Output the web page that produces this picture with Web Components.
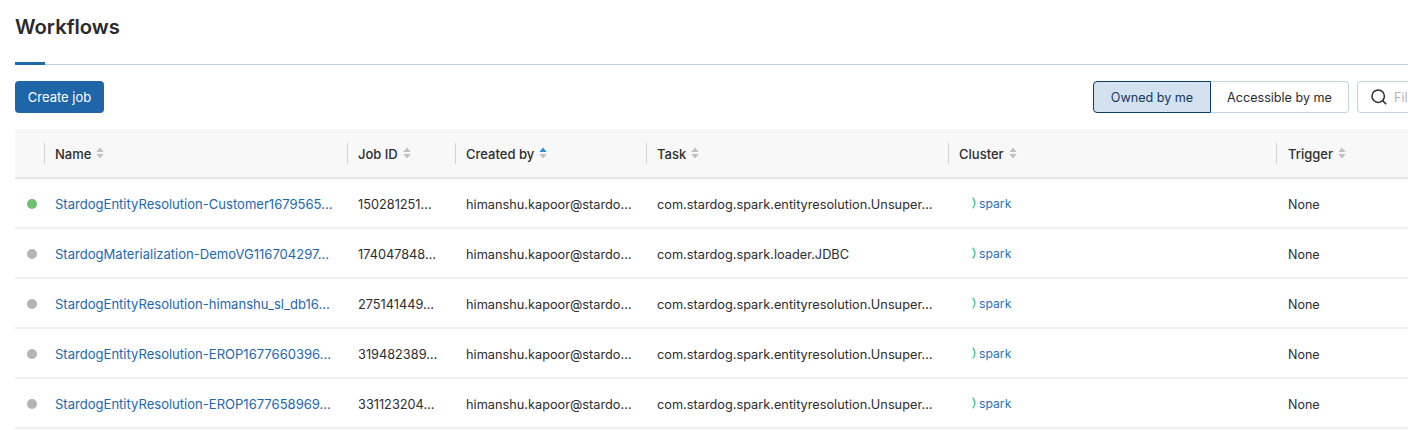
<!DOCTYPE html>
<html lang="en"><head><meta charset="utf-8"><title>Workflows</title>
<style>
html,body{margin:0;padding:0;background:#fff;overflow:hidden;height:430px}
body{font-family:Inter,"Liberation Sans",sans-serif;color:#2d2d2d}
</style></head><body>
<wf-page>
  <wf-heading slot="head">Workflows</wf-heading>
  <wf-tabline slot="head"></wf-tabline>
  <wf-toolbar slot="head"></wf-toolbar>
  <wf-table>
    <wf-head></wf-head>
    <wf-row state="on" name="StardogEntityResolution-Customer1679565…" job="150281251…" task="com.stardog.spark.entityresolution.Unsuper…"></wf-row>
    <wf-row name="StardogMaterialization-DemoVG116704297…" job="174047848…" task="com.stardog.spark.loader.JDBC"></wf-row>
    <wf-row name="StardogEntityResolution-himanshu_sl_db16…" job="275141449…" task="com.stardog.spark.entityresolution.Unsuper…"></wf-row>
    <wf-row name="StardogEntityResolution-EROP1677660396…" job="319482389…" task="com.stardog.spark.entityresolution.Unsuper…"></wf-row>
    <wf-row name="StardogEntityResolution-EROP1677658969…" job="331123204…" task="com.stardog.spark.entityresolution.Unsuper…"></wf-row>
  </wf-table>
</wf-page>
<script>
const COLS='29px 303px 108px 191px 302px 328px 132px';
const def=(n,html)=>customElements.define(n,class extends HTMLElement{
  connectedCallback(){ if(this.shadowRoot)return; const r=this.attachShadow({mode:'open'}); r.innerHTML=typeof html==='function'?html(this):html; }
});
def('wf-page',`<style>:host{display:block;width:1408px;height:430px;overflow:hidden;box-sizing:border-box;padding-left:15px}
.h{display:block}</style><slot name="head" class="h"></slot><slot></slot>`);
def('wf-heading',`<style>:host{display:block;height:62px;box-sizing:border-box;padding-top:14px;font-size:20.2px;line-height:26px;font-weight:600;color:#2a2a2a}</style><slot></slot>`);
def('wf-tabline',`<style>:host{display:block;height:3px;box-sizing:border-box;padding-top:2px;position:relative}
.l{height:1px;background:#bdd0e3}.a{position:absolute;left:0;top:0;width:30px;height:3px;background:#1f68ac}</style><div class="a"></div><div class="l"></div>`);
def('wf-toolbar',`<style>:host{display:flex;align-items:stretch;height:32px;margin-top:16px;font-size:12.6px;box-sizing:border-box}
.create{width:89px;background:#1f66a9;color:#fff;border-radius:4px;text-align:center;font-size:13px;line-height:33px}
.sp{flex:1}
.seg{display:flex;margin-right:8px}
.own{width:118px;box-sizing:border-box;background:#d4e2f0;border:1px solid #0e3c68;border-radius:4px 0 0 4px;color:#12395f;text-align:center;line-height:31px}
.acc{width:138px;box-sizing:border-box;border:1px solid #c6d5e4;border-left:0;border-radius:0 4px 4px 0;text-align:center;line-height:31px;color:#2d2d2d}
.filter{width:51px;box-sizing:border-box;border:1px solid #c6d5e4;border-right:0;border-radius:4px 0 0 4px;display:flex;align-items:center;padding-left:13px;gap:7px;color:#b5b5b5;overflow:hidden}
svg{flex:none}</style>
<div class="create">Create job</div><div class="sp"></div>
<div class="seg"><div class="own">Owned by me</div><div class="acc">Accessible by me</div></div>
<div class="filter"><svg width="16" height="16" viewBox="0 0 16 16" fill="none" stroke="#2d2d2d" stroke-width="1.5"><circle cx="7.2" cy="7.2" r="6.2"/><path d="M11.6 11.6 15.2 15.2"/></svg><span>Fil</span></div>`);
def('wf-table',`<style>:host{display:block;margin-top:16px;width:1393px}</style><slot></slot>`);
const sort=(up)=>`<svg width="8" height="12" viewBox="0 0 8 12"><path d="M4 .5 7.6 5H.4Z" fill="${up?'#2b8be0':'#c0c0c0'}"/><path d="M4 11.5 7.6 7H.4Z" fill="#c0c0c0"/></svg>`;
const hc=(t,up)=>`<div class="c"><span>${t}</span>${sort(up)}</div>`;
def('wf-head',`<style>:host{display:grid;grid-template-columns:${COLS};height:50px;background:#f8f8f8;border-bottom:2px solid #e6e6e6;box-sizing:border-box;align-items:center;font-size:13px;font-weight:500;color:#2d2d2d}
.c{display:flex;align-items:center;height:21px;border-left:1px solid #d4d4d4;padding:2px 0 0 10px;box-sizing:border-box;white-space:nowrap}
.c svg{flex:none;margin:-2px 0 0 5px}
.c:last-child{padding-left:11px}</style>
<div></div>${hc('Name')}${hc('Job ID')}${hc('Created by',true)}${hc('Task')}${hc('Cluster')}${hc('Trigger')}`);
def('wf-row',el=>{const g=el.getAttribute.bind(el);return `<style>:host{display:grid;grid-template-columns:${COLS};height:50px;box-sizing:border-box;border-bottom:2px solid #f0f0f0;padding-top:2px;align-items:center;font-size:12.75px;color:#2d2d2d}
.d{width:10px;height:10px;border-radius:50%;background:#b4b4b4;margin:0 0 0 12px}
.d.on{background:#6cbf6c}
.n{padding-left:11px;color:#1f68ac;font-size:13.05px;white-space:nowrap;overflow:hidden}
.t{padding-left:11px;white-space:nowrap;overflow:hidden}
.s{padding-left:24px;color:#2a72b5;display:flex;align-items:center;gap:3px;font-size:12.2px;margin-top:-2px}
.last{padding-left:12px;font-size:12.5px}</style>
<div class="d ${g('state')==='on'?'on':''}"></div>
<div class="n">${g('name')}</div><div class="t">${g('job')}</div><div class="t">himanshu.kapoor@stardo…</div><div class="t">${g('task')}</div>
<div class="s"><svg width="4" height="12" viewBox="0 0 4 12" fill="none" stroke="#4fc79a" stroke-width="1.5"><path d="M.7 .7C3.6 3.6 3.6 8.4 .7 11.3"/></svg><span>spark</span></div>
<div class="last">None</div>`});
</script>
</body></html>
